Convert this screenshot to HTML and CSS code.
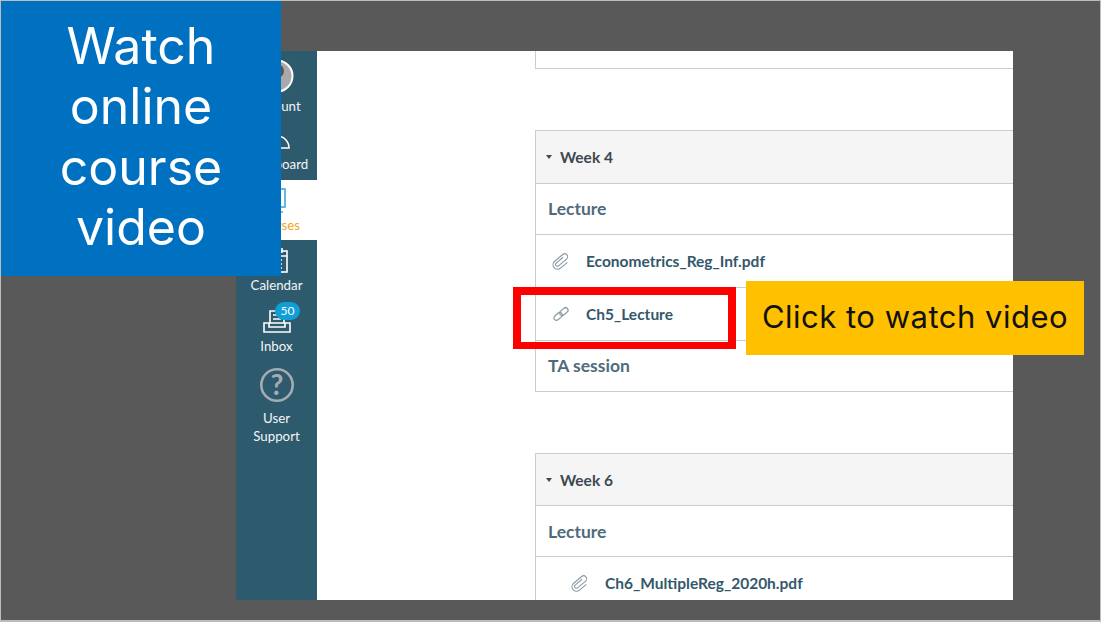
FILE: index.html
```html
<!DOCTYPE html>
<html lang="en">
<head>
    <meta charset="UTF-8">
    <title>Watch online course video</title>
    <link rel="stylesheet" href="styles.css">
</head>
<body>
    <div class="slide">
        <div class="shot">
            <nav class="nav">
                <a class="nav-item nav-account">
                    <svg width="34" height="34" viewBox="0 0 34 34"><circle cx="17" cy="17" r="15.500" fill="#a9a9a9" stroke="#fff" stroke-width="2"/><circle cx="17" cy="12" r="7" fill="#555"/></svg>
                    <span>Account</span>
                </a>
                <a class="nav-item nav-dashboard">
                    <svg width="26" height="22" viewBox="0 0 26 22" fill="none" stroke="#fff" stroke-width="1.6"><path d="M1 21a12 12 0 1 1 24 0z"/><path d="M13 16l3-6"/></svg>
                    <span>Dashboard</span>
                </a>
                <a class="nav-item nav-courses">
                    <svg width="28" height="26" viewBox="0 0 28 26" fill="none" stroke="#41a6d9" stroke-width="1.6"><rect x="5" y="1" width="17" height="18"/><path d="M14 19v5M8 24h12"/></svg>
                    <span>Courses</span>
                </a>
                <a class="nav-item nav-calendar">
                    <svg width="24" height="26" viewBox="0 0 24 26" fill="none" stroke="#fff" stroke-width="1.6"><rect x="3" y="3" width="19" height="21"/><path d="M8 0v5M17 0v5M3 8h19M8 12h2M15 12h2M8 16h2M15 16h2M8 20h2M15 20h2"/></svg>
                    <span>Calendar</span>
                </a>
                <a class="nav-item nav-inbox">
                    <svg width="28" height="24" viewBox="0 0 28 24" fill="none" stroke="#fff" stroke-width="1.6"><path d="M7 13V1h14v12M10 5h8M10 9h8M1 13h26v9H1zM6 13v4h16v-4"/></svg>
                    <span class="badge">50</span>
                    <span>Inbox</span>
                </a>
                <a class="nav-item nav-help">
                    <svg width="36" height="36" viewBox="0 0 36 36"><circle cx="18" cy="18" r="15.700" fill="none" stroke="#a3acb1" stroke-width="2.600"/><text x="18" y="28" text-anchor="middle" class="help-mark">?</text></svg>
                    <span>User<br>Support</span>
                </a>
            </nav>
            <main class="content">
                <div class="module module-cut"></div>

                <section class="module">
                    <h2 class="module-head"><span class="caret"></span>Week 4</h2>
                    <div class="row row-sub">Lecture</div>
                    <div class="row row-item">
                        <svg class="item-icon" width="18" height="18" viewBox="0 0 18 18" fill="none" stroke="#8a9aa3" stroke-width="1.1"><path transform="rotate(50 9 9)" d="M7.500 5v9a1.800 1.800 0 0 0 3.600 0V3.500a3 3 0 0 0-6 0V14a4.500 4.500 0 0 0 9 0V5"/></svg>
                        <a class="item-link">Econometrics_Reg_Inf.pdf</a>
                    </div>
                    <div class="row row-item">
                        <svg class="item-icon" width="18" height="18" viewBox="0 0 18 18" fill="none" stroke="#8a9aa3" stroke-width="1.200"><g transform="rotate(-40 9 9)"><rect x="0.500" y="6.500" width="9.500" height="5" rx="2.500"/><rect x="8" y="6.500" width="9.500" height="5" rx="2.500"/></g></svg>
                        <a class="item-link">Ch5_Lecture</a>
                    </div>
                    <div class="row row-sub row-last">TA session</div>
                </section>

                <section class="module">
                    <h2 class="module-head module-head-short"><span class="caret"></span>Week 6</h2>
                    <div class="row row-sub">Lecture</div>
                    <div class="row row-item row-indent">
                        <svg class="item-icon" width="18" height="18" viewBox="0 0 18 18" fill="none" stroke="#8a9aa3" stroke-width="1.1"><path transform="rotate(50 9 9)" d="M7.500 5v9a1.800 1.800 0 0 0 3.600 0V3.500a3 3 0 0 0-6 0V14a4.500 4.500 0 0 0 9 0V5"/></svg>
                        <a class="item-link">Ch6_MultipleReg_2020h.pdf</a>
                    </div>
                </section>
            </main>
        </div>

        <div class="banner">Watch<br>online<br>course<br>video</div>
        <div class="highlight"></div>
        <div class="callout">Click to watch video</div>
    </div>
</body>
</html>
```

FILE: styles.css
```css
html, body {
    margin: 0;
    padding: 0;
}
body {
    width: 1101px;
    height: 622px;
    overflow: hidden;
    font-family: Lato, "Open Sans", sans-serif;
}
.slide {
    position: relative;
    box-sizing: border-box;
    width: 1101px;
    height: 622px;
    padding: 50px 87px 20px 235px;
    background-color: #595959;
    border: 1px solid #bdbdbd;
    border-bottom-width: 2px;
}
.shot {
    display: flex;
    height: 549px;
    overflow: hidden;
    background-color: #fff;
}

/* left nav */
.nav {
    flex: 0 0 81px;
    background-color: #2e5a6e;
    color: #f2f5f6;
    font-size: 13.300px;
    line-height: 18px;
    text-align: center;
}
.nav-item {
    position: relative;
    display: flex;
    flex-direction: column;
    align-items: center;
    justify-content: flex-end;
}
.nav-account {
    height: 64px;
}
.nav-account svg {
    margin-bottom: 4px;
}
.nav-dashboard {
    height: 58px;
    padding-bottom: 7px;
}
.nav-dashboard svg {
    margin-bottom: 6px;
}
.nav-courses {
    height: 60px;
    box-sizing: border-box;
    padding-bottom: 6px;
    background-color: #fff;
    color: #f5a623;
}
.nav-courses svg {
    margin-bottom: 2px;
}
.nav-calendar {
    height: 54px;
}
.nav-calendar svg {
    margin-bottom: 2px;
}
.nav-inbox {
    height: 61px;
}
.nav-inbox svg {
    margin-bottom: 3px;
}
.nav-help {
    height: 96px;
    justify-content: flex-start;
    padding-top: 4px;
}
.nav-help svg {
    margin: 8px 0 6px;
}
.help-mark {
    font-family: Lato, sans-serif;
    font-size: 28px;
    font-weight: 700;
    fill: #a3acb1;
}
.badge {
    position: absolute;
    top: 8px;
    left: 39px;
    width: 25px;
    height: 18px;
    border-radius: 9px;
    background-color: #0f9ed5;
    color: #fff;
    font-size: 12px;
    line-height: 18px;
}

/* module list */
.content {
    flex: 1;
    padding-left: 218px;
    color: #2d3b45;
}
.module {
    box-sizing: border-box;
    width: 500px;
    margin-bottom: 61px;
    border: 1px solid #c7cdd1;
    border-right: none;
}
.module-cut {
    height: 18px;
    border-top: none;
}
.module-head {
    display: flex;
    align-items: center;
    height: 52px;
    margin: 0;
    padding-left: 10px;
    background-color: #f5f5f5;
    font-size: 15.500px;
    font-weight: 700;
    color: #3d4850;
}
.module-head-short {
    height: 51px;
    padding-top: 1px;
    box-sizing: border-box;
}
.caret {
    width: 0;
    height: 0;
    margin-right: 8px;
    border-left: 3.500px solid transparent;
    border-right: 3.500px solid transparent;
    border-top: 4px solid #3d4850;
}
.row {
    display: flex;
    align-items: center;
    box-sizing: border-box;
    border-top: 1px solid #c7cdd1;
}
.row-sub {
    height: 51px;
    padding: 0 0 2px 12px;
    font-size: 17.500px;
    font-weight: 700;
    color: #4f6b7b;
}
.module-head-short + .row-sub {
    padding-bottom: 0;
}
.row-item {
    height: 53px;
    padding-left: 16px;
}
.row-indent {
    height: 52px;
    padding-left: 35px;
}
.item-icon {
    margin-right: 16px;
}
.item-link {
    font-size: 15.500px;
    font-weight: 700;
    color: #33586b;
}

/* overlays on the slide */
.banner {
    position: absolute;
    top: 0;
    left: 0;
    width: 280px;
    height: 275px;
    padding-top: 15px;
    box-sizing: border-box;
    background-color: #0070c0;
    color: #fff;
    font-family: Inter, "Open Sans", sans-serif;
    font-size: 50px;
    line-height: 60.300px;
    text-align: center;
}
.highlight {
    position: absolute;
    top: 286px;
    left: 512px;
    box-sizing: border-box;
    width: 223px;
    height: 62px;
    border: 8px solid #ff0000;
    border-bottom-width: 7px;
}
.callout {
    position: absolute;
    top: 280px;
    left: 745px;
    width: 338px;
    height: 74px;
    background-color: #ffc000;
    color: #111;
    font-family: Inter, "Open Sans", sans-serif;
    font-size: 31px;
    letter-spacing: 0.5px;
    line-height: 72px;
    text-align: center;
}
```
